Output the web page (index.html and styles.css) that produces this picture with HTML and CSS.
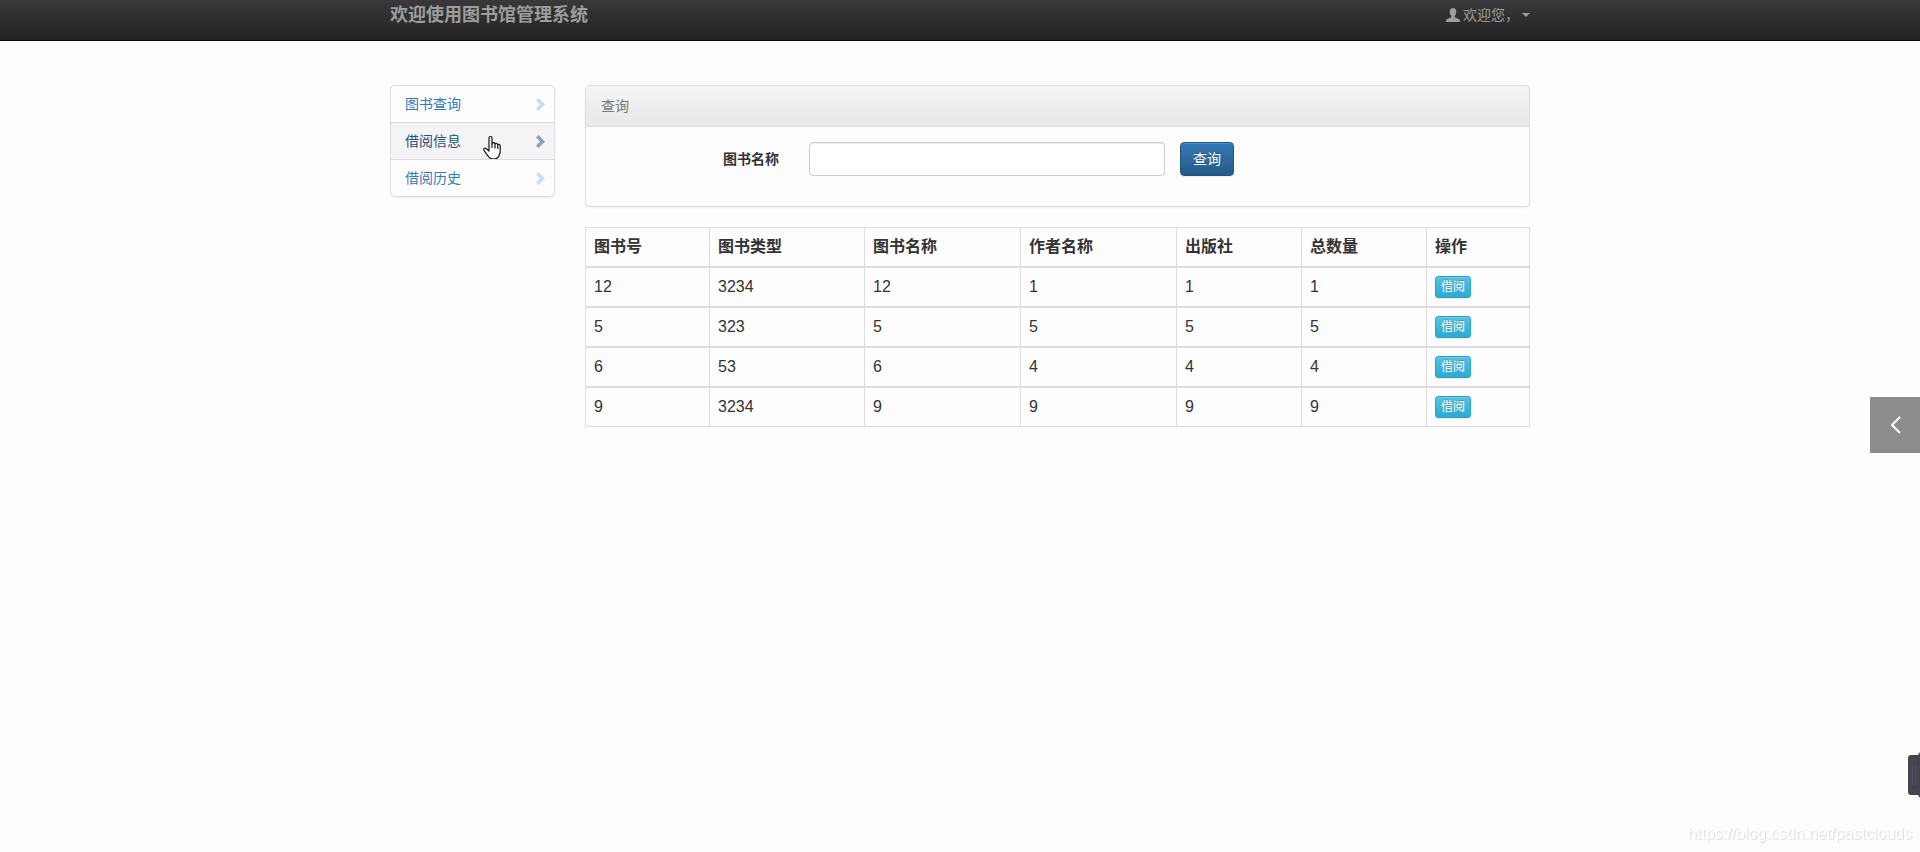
FILE: index.html
```html
<!DOCTYPE html>
<html lang="zh-CN">
<head>
<meta charset="utf-8">
<title>图书馆管理系统</title>
<link rel="stylesheet" href="styles.css">
</head>
<body>
<svg class="sprite" aria-hidden="true">
  <symbol id="chevron" viewBox="0 0 9 13"><path d="M2.5 0 9 6.500 2.500 13 0 10.500 4 6.500 0 2.500z" fill="currentColor"/></symbol>
</svg>
<header class="navbar">
  <div class="container navbar-row">
    <a class="brand" href="#">欢迎使用图书馆管理系统</a>
    <a class="user" href="#">
      <svg class="user-icon" viewBox="0 0 14 14" aria-hidden="true"><path d="M7 0C4.800 0 3.600 1.600 3.700 3.800c0 1.600.6 3 1.500 3.900v1.200C4.900 9.800 1.800 10.300.6 11.400.1 11.900 0 12.700 0 14h14c0-1.300-.1-2.100-.6-2.600-1.200-1.100-4.300-1.600-4.600-2.500V7.700c.9-.9 1.500-2.300 1.500-3.900C10.400 1.600 9.200 0 7 0z" fill="currentColor"/></svg>
      <span>欢迎您，</span>
      <span class="caret"></span>
    </a>
  </div>
</header>
<div class="container layout">
  <nav class="menu">
    <a class="menu-item" href="#">图书查询<svg class="chevron" aria-hidden="true"><use href="#chevron"/></svg></a>
    <a class="menu-item is-hover" href="#">借阅信息<svg class="chevron" aria-hidden="true"><use href="#chevron"/></svg>
      <svg class="pointer" viewBox="0 0 18 24" aria-hidden="true"><path d="M6 15.500V2.500C6 .5 9 .5 9 2.500V8c.3-1.300 2.700-1.200 3 .6.500-1 2.500-.8 2.800.7.600-.8 2.400-.4 2.400 1.400V16c0 2-.8 3-1.300 4.300-.8 2-2.600 3.200-5.400 3.200-3 0-4.500-1.200-5.600-3.200L1 14.800c-.9-1.700.8-2.900 2.300-1.600zM9 7.500V12M12 8.500V12.500M14.800 9.500V13" fill="#fff" stroke="#111" stroke-width="1.200" stroke-linejoin="round" stroke-linecap="round"/></svg>
    </a>
    <a class="menu-item" href="#">借阅历史<svg class="chevron" aria-hidden="true"><use href="#chevron"/></svg></a>
  </nav>
  <main class="main">
    <section class="panel">
      <div class="panel-heading">查询</div>
      <form class="search">
        <label class="search-label" for="book-name">图书名称</label>
        <input class="search-input" id="book-name" type="text">
        <button class="btn btn-primary" type="button">查询</button>
      </form>
    </section>
    <table class="books">
      <colgroup><col class="w-s"><col class="w-m"><col class="w-l"><col class="w-l"><col class="w-s"><col class="w-s"><col></colgroup>
      <thead>
        <tr><th>图书号</th><th>图书类型</th><th>图书名称</th><th>作者名称</th><th>出版社</th><th>总数量</th><th>操作</th></tr>
      </thead>
      <tbody>
        <tr><td>12</td><td>3234</td><td>12</td><td>1</td><td>1</td><td>1</td><td><button class="btn btn-info" type="button">借阅</button></td></tr>
        <tr><td>5</td><td>323</td><td>5</td><td>5</td><td>5</td><td>5</td><td><button class="btn btn-info" type="button">借阅</button></td></tr>
        <tr><td>6</td><td>53</td><td>6</td><td>4</td><td>4</td><td>4</td><td><button class="btn btn-info" type="button">借阅</button></td></tr>
        <tr><td>9</td><td>3234</td><td>9</td><td>9</td><td>9</td><td>9</td><td><button class="btn btn-info" type="button">借阅</button></td></tr>
      </tbody>
    </table>
  </main>
</div>
<button class="drawer" type="button" aria-label="展开">
  <svg class="drawer-icon" viewBox="0 0 10 18" aria-hidden="true"><path d="M9 1 1 9l8 8" fill="none" stroke="#fff" stroke-width="2"/></svg>
</button>
<svg class="handle" viewBox="0 0 12 46" aria-hidden="true"><path d="M12 0 10 3H3Q0 3 0 6V40Q0 43 3 43H10L12 46z" fill="#44444f"/><path d="M4.500 13V33M7.500 13V33" stroke="#50505b"/></svg>
<span class="watermark">https://blog.csdn.net/pastclouds</span>
</body>
</html>
```

FILE: styles.css
```css
* {
  box-sizing: border-box;
}

body {
  margin: 0;
  min-height: 100vh;
  background: #fefdfe;
  color: #333;
  font: 14px/20px "Liberation Sans", "Noto Sans CJK SC", sans-serif;
}

a {
  color: #337ab7;
  text-decoration: none;
}

.sprite {
  position: absolute;
  width: 0;
  height: 0;
}

.container {
  max-width: 1170px;
  margin: 0 auto;
  padding: 0 15px;
}

.navbar {
  height: 41px;
  background: linear-gradient(#39393b, #222);
  border-bottom: 1px solid #080808;
}

.navbar-row {
  display: flex;
  justify-content: space-between;
  align-items: flex-start;
  padding-top: 5px;
}

.brand,
.user {
  color: #9d9d9d;
}

.brand {
  font-size: 18px;
  font-weight: 700;
}

.user {
  display: flex;
  align-items: center;
  gap: 3px;
}

.user-icon {
  width: 14px;
  height: 14px;
}

.caret {
  border: 4px solid transparent;
  border-top-color: currentColor;
  border-bottom: 0;
}

.layout {
  display: grid;
  grid-template-columns: 165px 1fr;
  gap: 30px;
  align-items: start;
  padding-top: 44px;
}

.menu {
  border: 1px solid #ddd;
  border-radius: 5px;
  box-shadow: 0 1px 2px rgba(0, 0, 0, 0.07);
}

.menu-item {
  position: relative;
  display: flex;
  align-items: center;
  justify-content: space-between;
  padding: 8px 9px 8px 14px;
}

.menu-item + .menu-item {
  border-top: 1px solid #ddd;
}

.is-hover {
  background: #f4f4f6;
  color: #23527c;
}

.chevron {
  width: 9px;
  height: 13px;
  color: #cbdeeb;
}

.is-hover .chevron {
  color: #8ea3b8;
}

.pointer {
  position: absolute;
  left: 92px;
  top: 12px;
  width: 18px;
  height: 25px;
}

.panel {
  margin-bottom: 20px;
  border: 1px solid #ddd;
  border-radius: 4px;
  box-shadow: 0 1px 2px rgba(0, 0, 0, 0.05);
}

.panel-heading {
  padding: 10px 15px;
  border-bottom: 1px solid #ddd;
  border-radius: 3px 3px 0 0;
  background: linear-gradient(#f5f5f5, #e8e7e9);
  color: #777;
}

.search {
  display: grid;
  grid-template-columns: 208fr 356fr 349fr;
  column-gap: 15px;
  align-items: center;
  padding: 15px 0 30px;
}

.search-label {
  padding-right: 15px;
  text-align: right;
  font-weight: 700;
}

.search-input {
  width: 100%;
  height: 34px;
  padding: 6px 12px;
  border: 1px solid #ccc;
  border-radius: 4px;
  background: #fff;
  box-shadow: inset 0 1px 1px rgba(0, 0, 0, 0.075);
  font: inherit;
}

.btn {
  justify-self: start;
  border: 1px solid;
  color: #fff;
  font: inherit;
  text-shadow: 0 -1px 0 rgba(0, 0, 0, 0.2);
  box-shadow: inset 0 1px 0 rgba(255, 255, 255, 0.15), 0 1px 1px rgba(0, 0, 0, 0.075);
}

.btn-primary {
  padding: 6px 12px;
  border-color: #245580;
  border-radius: 4px;
  background: linear-gradient(#337ab7, #265a88);
}

.btn-info {
  display: block;
  padding: 1px 5px;
  border-color: #28a4c9;
  border-radius: 3px;
  background: linear-gradient(#5bc0de, #2aabd2);
  font-size: 12px;
  line-height: 18px;
}

.books {
  width: 100%;
  table-layout: fixed;
  border-collapse: separate;
  border-spacing: 0;
  font-size: 16px;
  line-height: 22px;
}

.books th,
.books td {
  height: 40px;
  padding: 0 8px;
  border: 1px solid #ddd;
  border-left: 0;
  text-align: left;
  vertical-align: middle;
}

.books th:first-child,
.books td:first-child {
  border-left: 1px solid #ddd;
}

.w-s {
  width: 125px;
}

.w-m {
  width: 155px;
}

.w-l {
  width: 156px;
}

.drawer {
  position: fixed;
  right: 0;
  top: 397px;
  display: flex;
  align-items: center;
  justify-content: center;
  width: 50px;
  height: 56px;
  padding: 0 0 0 2px;
  border: 0;
  background: #8c8c8c;
}

.drawer-icon {
  width: 10px;
  height: 18px;
}

.handle {
  position: fixed;
  right: 0;
  bottom: 54px;
  width: 12px;
  height: 46px;
}

.watermark {
  position: fixed;
  right: 8px;
  bottom: 8px;
  color: #fff;
  font-size: 16px;
  text-shadow: 1px 1px 1px #d8d8dc;
}
```
